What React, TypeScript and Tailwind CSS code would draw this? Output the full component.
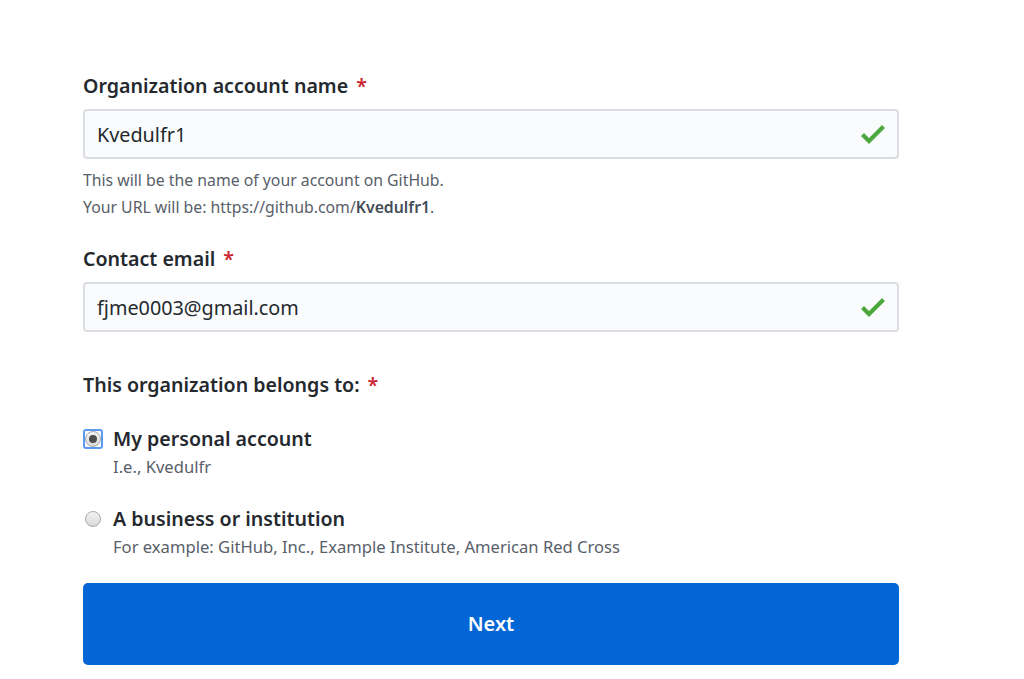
import React from "react";

function Check() {
    return (
        <svg width="24" height="32" viewBox="0 0 12 16" className="shrink-0" fill="#4ca83d">
            <path d="M12 5l-8 8-4-4 1.5-1.5L4 10l6.5-6.5L12 5z" />
        </svg>
    );
}

function Required() {
    return <span className="ml-2 text-[#cb2431]">*</span>;
}

function Field({ label, value }: { label: string; value: string }) {
    return (
        <div>
            <label className="block text-[19.6px] font-semibold leading-[30px] text-[#24292e]">
                {label}
                <Required />
            </label>
            <div className="mt-2 flex h-[50px] items-center justify-between rounded-[4px] border-2 border-[#dadde1] bg-[#fafbfc] pl-[12px] pr-[12px]">
                <span className="pt-[2px] text-[19.8px] text-[#24292e]">{value}</span>
                <Check />
            </div>
        </div>
    );
}

function Radio({ checked }: { checked?: boolean }) {
    return (
        <span
            className={
                checked
                    ? "flex h-[20px] w-[20px] items-center justify-center rounded-[3px] border-2 border-[#5b9af0]"
                    : "flex h-[20px] w-[20px] items-center justify-center"
            }
        >
            <span className="flex h-[16px] w-[16px] items-center justify-center rounded-full border border-[#a9a9a9] bg-gradient-to-b from-[#f4f4f4] to-[#d9d9d9]">
                {checked && <span className="h-[8px] w-[8px] rounded-full bg-[#4d4d4d]" />}
            </span>
        </span>
    );
}

function Option({ checked, title, note }: { checked?: boolean; title: string; note: string }) {
    return (
        <div>
            <div className="flex items-center gap-[10px]">
                <Radio checked={checked} />
                <span className="text-[19.6px] font-semibold leading-[30px] text-[#24292e]">{title}</span>
            </div>
            <p className="pl-[30px] text-[16.6px] leading-[26px] text-[#586069]">{note}</p>
        </div>
    );
}

export default function App() {
    return (
        <div className="min-h-screen bg-white" style={{ fontFamily: '"Noto Sans", "Open Sans", sans-serif' }}>
            <div className="ml-[83px] w-[816px] pt-[71px]">
                <Field label="Organization account name" value="Kvedulfr1" />
                <div className="mt-2 text-[15.8px] leading-[27px] text-[#586069]">
                    <p>This will be the name of your account on GitHub.</p>
                    <p>
                        Your URL will be: https://github.com/<strong className="font-semibold text-[#444d56]">Kvedulfr1</strong>.
                    </p>
                </div>

                <div className="mt-[23px]">
                    <Field label="Contact email" value="fjme0003@gmail.com" />
                </div>

                <h3 className="mt-[38px] text-[19.6px] font-semibold leading-[30px] text-[#24292e]">
                    This organization belongs to:
                    <Required />
                </h3>

                <div className="mt-[24px] flex flex-col gap-[24px]">
                    <Option checked title="My personal account" note="I.e., Kvedulfr" />
                    <Option title="A business or institution" note="For example: GitHub, Inc., Example Institute, American Red Cross" />
                </div>

                <button className="mt-[23px] flex h-[82px] w-full items-center justify-center rounded-[5px] bg-[#0366d6] text-[20px] font-semibold text-white">
                    Next
                </button>
            </div>
        </div>
    );
}
